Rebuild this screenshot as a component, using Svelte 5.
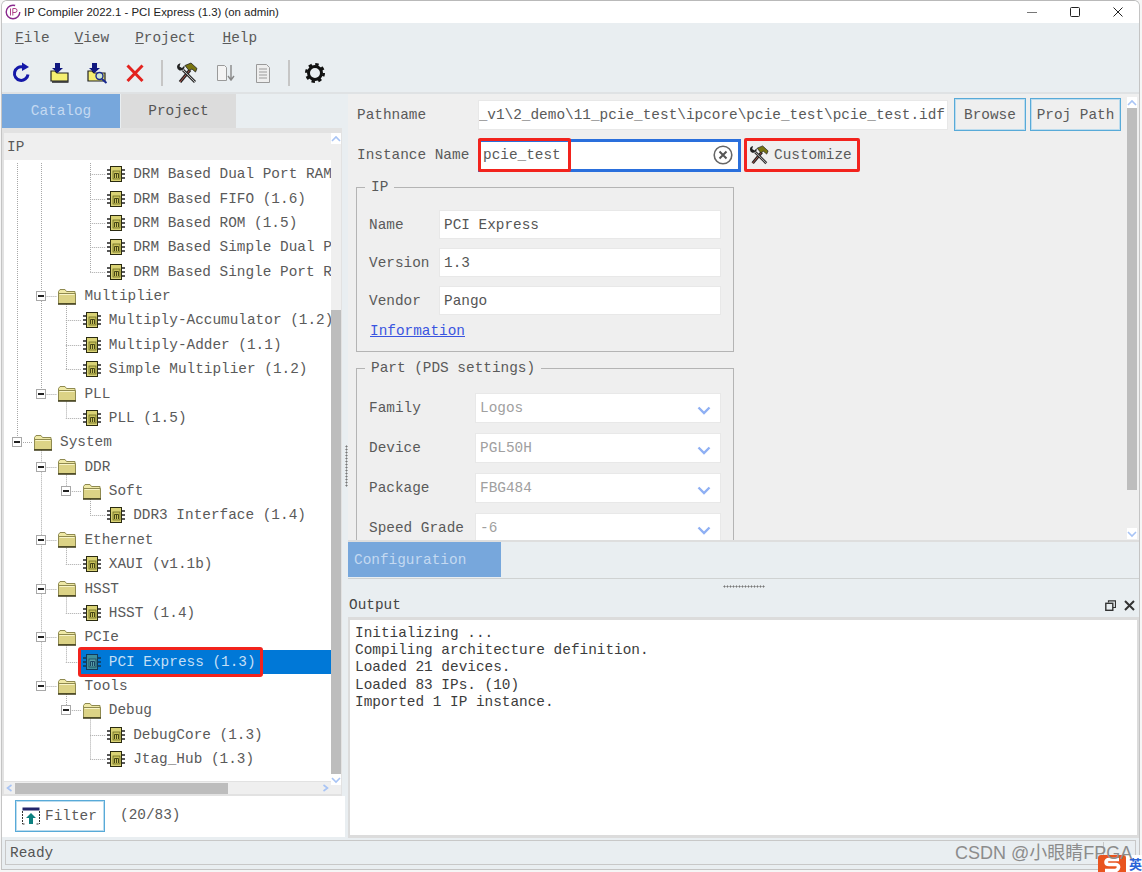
<script>
  const rows = [
    ['chip', 4, 'DRM Based Dual Port RAM (1.6)'],
    ['chip', 4, 'DRM Based FIFO (1.6)'],
    ['chip', 4, 'DRM Based ROM (1.5)'],
    ['chip', 4, 'DRM Based Simple Dual Port RAM (1.6)'],
    ['chip', 4, 'DRM Based Single Port RAM (1.6)'],
    ['folder', 2, 'Multiplier'],
    ['chip', 3, 'Multiply-Accumulator (1.2)'],
    ['chip', 3, 'Multiply-Adder (1.1)'],
    ['chip', 3, 'Simple Multiplier (1.2)'],
    ['folder', 2, 'PLL'],
    ['chip', 3, 'PLL (1.5)'],
    ['folder', 1, 'System'],
    ['folder', 2, 'DDR'],
    ['folder', 3, 'Soft'],
    ['chip', 4, 'DDR3 Interface (1.4)'],
    ['folder', 2, 'Ethernet'],
    ['chip', 3, 'XAUI (v1.1b)'],
    ['folder', 2, 'HSST'],
    ['chip', 3, 'HSST (1.4)'],
    ['folder', 2, 'PCIe'],
    ['chip', 3, 'PCI Express (1.3)', true],
    ['folder', 2, 'Tools'],
    ['folder', 3, 'Debug'],
    ['chip', 4, 'DebugCore (1.3)'],
    ['chip', 4, 'Jtag_Hub (1.3)']
  ].map(([kind, level, label, selected]) => ({ kind, level, label, selected }));

  const PITCH = 24.375;
  const y = (i) => 12.2 + PITCH * i;
  const indent = (level) => 8 + (level - 1) * 24.4;

  const X1 = 13.5, X2 = 37.5, X3 = 62.5, X4 = 86.5;
  const verticals = [
    [X1, -1, y(11)], [X2, -1, y(9)], [X2, y(11), y(21)], [X4, -1, y(4)],
    [X3, y(5), y(8)], [X3, y(9), y(10)], [X3, y(12), y(13)], [X4, y(13), y(14)],
    [X3, y(15), y(16)], [X3, y(17), y(18)], [X3, y(19), y(20)], [X3, y(21), y(22)],
    [X4, y(22), y(24)]
  ];
  const horizontals = rows.map((r, i) => {
    const x = indent(r.level) + 5;
    return { x1: x, x2: indent(r.level) + 21, y: Math.round(y(i)) + 0.5 };
  });

  const ipFields = [['Name', 'PCI Express'], ['Version', '1.3'], ['Vendor', 'Pango']];
  const partFields = [['Family', 'Logos'], ['Device', 'PGL50H'], ['Package', 'FBG484'], ['Speed Grade', '-6']];
  const logLines = ['Initializing ...', 'Compiling architecture definition.', 'Loaded 21 devices.', 'Loaded 83 IPs. (10)', 'Imported 1 IP instance.'];
  const menus = [['F', 'ile'], ['V', 'iew'], ['P', 'roject'], ['H', 'elp']];
</script>

{#snippet chip(sel)}
  <svg class="ico" width="18" height="18" viewBox="0 0 18 18">
    <path d="M0 5h4M0 9h4M0 13h4M14 5h4M14 9h4M14 13h4" stroke={sel ? '#12384f' : '#222'} stroke-width="1.3"/>
    <rect x="3.5" y="1.5" width="11" height="15" fill={sel ? '#3f8f9c' : '#d9d274'} stroke={sel ? '#123a5c' : '#2a2a10'}/>
    <rect x="6" y="6" width="7" height="8" fill={sel ? '#58a0a8' : '#c9c25c'} stroke={sel ? '#1d4a5c' : '#6a6a20'} stroke-width=".8"/>
    <path d="M7.5 13V8.5M9.5 13V8.5M11.5 13V8.5M7.5 8.5h4" stroke={sel ? '#123a5c' : '#3a3a10'} stroke-width=".9" fill="none"/>
  </svg>
{/snippet}

{#snippet folder()}
  <svg class="ico" width="18" height="17" viewBox="0 0 18 17">
    <path d="M.5 15.5V3.5l1.500-2h5l1.500 2h8.500v12z" fill="#efe9a6" stroke="#8f8a50"/>
    <path d="M.5 5.500h17v10H.5z" fill="#dcd386" stroke="#8f8a50"/>
    <path d="M0 16h18" stroke="#3c3a18" stroke-width="1.500"/>
    <path d="M1.500 6.500h15" stroke="#f8f4c8"/>
  </svg>
{/snippet}

{#snippet tools(size)}
  <svg width={size} height={size} viewBox="0 0 22 22">
    <path d="M4 20 14 8" stroke="#222" stroke-width="3.200"/>
    <path d="M4 20 14 8" stroke="#b85a50" stroke-width="1"/>
    <path d="M9 3.500 15 1l6 5.500-1.500 3.500-3.500-3-3 1.500z" fill="#787410" stroke="#222" stroke-width=".8"/>
    <path d="M7 8 19 20" stroke="#333" stroke-width="3"/>
    <path d="M7 8 19 20" stroke="#ddd" stroke-width=".8"/>
    <path d="M1 5a4.200 4.200 0 0 1 3.500-3.800L3.500 4.500l2.500 1.500 2.500-2.500a4.200 4.200 0 0 1-5 5A4 4 0 0 1 1 5z" fill="#222"/>
  </svg>
{/snippet}

{#snippet chevron()}
  <svg class="chev" width="14" height="9" viewBox="0 0 14 9"><path d="M1.500 1.500 7 7l5.500-5.500" fill="none" stroke="#8fb0f4" stroke-width="2.400"/></svg>
{/snippet}

{#snippet arrowBtn(d)}
  <svg width="10" height="8" viewBox="0 0 10 8"><path {d} fill="none" stroke="#a8c4f5" stroke-width="1.600"/></svg>
{/snippet}

<div class="window">
  <header class="title">
    <svg width="16" height="16" viewBox="0 0 16 16">
      <circle cx="8" cy="8" r="6.800" fill="none" stroke="#8a2a8e" stroke-width="1.400" stroke-dasharray="34 9"/>
      <path d="M5.500 4.500v7M7.800 4.500v7M7.800 4.500h2.200a1.800 1.800 0 0 1 0 4H7.800" fill="none" stroke="#b0438a"/>
    </svg>
    <span class="title-text">IP Compiler 2022.1 - PCI Express (1.3) (on admin)</span>
    <div class="winbtns">
      <svg width="10" height="10" viewBox="0 0 10 10"><path d="M0 5.500h10" stroke="#777"/></svg>
      <svg width="10" height="10" viewBox="0 0 10 10"><rect x=".5" y=".5" width="9" height="9" rx="1" fill="none" stroke="#222"/></svg>
      <svg width="10" height="10" viewBox="0 0 10 10"><path d="M.5 .5l9 9M9.500 .5l-9 9" stroke="#222"/></svg>
    </div>
  </header>

  <nav class="menubar">
    {#each menus as [first, rest]}
      <span class="menu"><u>{first}</u>{rest}</span>
    {/each}
  </nav>

  <div class="toolbar">
    <span class="tool">
      <svg width="22" height="22" viewBox="0 0 22 22"><path d="M17 12.500A6.800 6.800 0 1 1 12 5" fill="none" stroke="#1418a8" stroke-width="3"/><path d="M11 .5 18 5l-7 4z" fill="#1418a8"/></svg>
    </span>
    <span class="tool">
      <svg width="22" height="22" viewBox="0 0 22 22"><path d="M2 19V9h4l2 2h11v8z" fill="#f5ef70" stroke="#222" stroke-width="1.200"/><path d="M19.500 20H3" stroke="#222" stroke-width="1.500"/><path d="M6 1h5v5h3L8.500 11 3 6h3z" fill="#101880"/></svg>
    </span>
    <span class="tool">
      <svg width="22" height="22" viewBox="0 0 22 22"><path d="M2 19V9h4l2 2h11v8z" fill="#f5ef70" stroke="#222" stroke-width="1.200"/><path d="M6 1h5v5h3L8.500 11 3 6h3z" fill="#101880"/><circle cx="13.500" cy="14" r="3.500" fill="#cfe8d0" stroke="#1a2a90" stroke-width="1.400"/><path d="M16 17l4.500 4" stroke="#1a2a90" stroke-width="2"/></svg>
    </span>
    <span class="tool">
      <svg width="22" height="22" viewBox="0 0 22 22"><path d="M3.500 3.500 18.500 19M18.500 3.500 3.500 19" stroke="#e3231f" stroke-width="3"/></svg>
    </span>
    <span class="sep"></span>
    <span class="tool">{@render tools(22)}</span>
    <span class="tool">
      <svg width="22" height="22" viewBox="0 0 22 22"><path d="M3.500 3.500h7l2 2v13h-9z" fill="#f4f4f4" stroke="#9a9a9a"/><path d="M17 3v14M14 14l3 4 3-4" fill="none" stroke="#888" stroke-width="1.400"/></svg>
    </span>
    <span class="tool">
      <svg width="22" height="22" viewBox="0 0 22 22"><path d="M4.500 2.500h10l3 3v15h-13z" fill="#eeeeee" stroke="#9a9a9a"/><path d="M7 7h8M7 10h8M7 13h8M7 16h8" stroke="#9a9a9a"/></svg>
    </span>
    <span class="sep sep2"></span>
    <span class="tool">
      <svg width="22" height="22" viewBox="0 0 22 22"><circle cx="11" cy="11" r="6.500" fill="none" stroke="#111" stroke-width="3"/><circle cx="11" cy="11" r="8.700" fill="none" stroke="#111" stroke-width="2.600" stroke-dasharray="3.400 3.430"/></svg>
    </span>
  </div>

  <main class="main">
    <aside class="left">
      <div class="tabs">
        <span class="tab active">Catalog</span>
        <span class="tab second">Project</span>
      </div>
      <div class="tree-frame">
        <div class="tree-col">
          <div class="tree-head">IP</div>
          <div class="tree-body">
            <svg class="guides" width="340" height="640">
              {#each verticals as [x, a, b]}
                <line x1={x} x2={x} y1={a} y2={b}/>
              {/each}
              {#each horizontals as h}
                <line x1={h.x1} x2={h.x2} y1={h.y} y2={h.y}/>
              {/each}
            </svg>
            {#each rows as r}
              <div class="row" style="padding-left:{indent(r.level)}px">
                <span class="slot">
                  {#if r.kind === 'folder'}<span class="toggle"></span>{/if}
                </span>
                <span class="rowbody" class:selected={r.selected}>
                  {#if r.kind === 'chip'}{@render chip(r.selected)}{:else}{@render folder()}{/if}
                  <span class="label">{r.label}</span>
                  {#if r.selected}<span class="redbox"></span>{/if}
                </span>
              </div>
            {/each}
          </div>
          <div class="hscroll">
            <span class="sbtn">{@render arrowBtn('M6.500 1 2.500 4l4 3')}</span>
            <span class="hthumb"></span>
            <span class="sbtn">{@render arrowBtn('M3.500 1l4 3-4 3')}</span>
          </div>
        </div>
        <div class="vscroll">
          <span class="vbtn">{@render arrowBtn('M1 6l4-4 4 4')}</span>
          <span class="vgap"></span>
          <span class="vthumb"></span>
          <span class="vbtn">{@render arrowBtn('M1 2l4 4 4-4')}</span>
        </div>
      </div>
      <div class="filterbar">
        <span class="btn filter">
          <svg width="18" height="18" viewBox="0 0 18 18"><rect x=".5" y=".5" width="17" height="3" fill="#22246a"/><path d="M.5 4v13M17.500 4v13M.5 17h3M14.500 17h3" stroke="#333" stroke-dasharray="2 1"/><path d="M9 6l5 5h-3v6H7v-6H4z" fill="#0d8080"/></svg>
          Filter
        </span>
        <span class="count">(20/83)</span>
      </div>
    </aside>

    <div class="split">
      <span class="grip"></span>
    </div>

    <section class="right">
      <div class="config">
        <div class="config-scroll">
          <div class="formrow path">
            <span class="flabel">Pathname</span>
            <span class="input pathinput"><span>_v1\2_demo\11_pcie_test\ipcore\pcie_test\pcie_test.idf</span></span>
            <span class="btn browse">Browse</span>
            <span class="btn proj">Proj Path</span>
          </div>
          <div class="formrow inst">
            <span class="flabel">Instance Name</span>
            <span class="instinput">
              <span class="insttext">pcie_test</span>
              <svg width="20" height="20" viewBox="0 0 20 20"><circle cx="10" cy="10" r="8.800" fill="none" stroke="#666" stroke-width="1.600"/><path d="M6.500 6.500l7 7M13.500 6.500l-7 7" stroke="#555" stroke-width="2"/></svg>
            </span>
            <span class="customize">{@render tools(20)}<span>Customize</span></span>
          </div>

          <fieldset class="group ip">
            <legend>IP</legend>
            {#each ipFields as [k, v]}
              <div class="field">
                <span class="k">{k}</span>
                <span class="input val">{v}</span>
              </div>
            {/each}
            <a class="link" href="#info">Information</a>
          </fieldset>

          <fieldset class="group part">
            <legend>Part (PDS settings)</legend>
            {#each partFields as [k, v]}
              <div class="field">
                <span class="k">{k}</span>
                <span class="input val sel">{v}{@render chevron()}</span>
              </div>
            {/each}
          </fieldset>
        </div>
        <div class="cfg-scroll">
          <span class="vbtn">{@render arrowBtn('M1 6l4-4 4 4')}</span>
          <span class="cfg-thumb"></span>
          <span class="vgap"></span>
          <span class="vbtn">{@render arrowBtn('M1 2l4 4 4-4')}</span>
        </div>
      </div>
      <div class="cfgtabs"><span class="tab active cfgtab">Configuration</span></div>
      <div class="hsplit"><span class="hgrip"></span></div>
      <div class="outhead">
        <span>Output</span>
        <span class="outicons">
          <svg width="11" height="11" viewBox="0 0 11 11"><path d="M3.500 2.500V.8h7v6.700H8" fill="none" stroke="#333" stroke-width="1.200"/><rect x=".8" y="3.300" width="7" height="7" fill="none" stroke="#333" stroke-width="1.400"/></svg>
          <svg width="11" height="11" viewBox="0 0 11 11"><path d="M1 1l9 9M10 1l-9 9" stroke="#333" stroke-width="2"/></svg>
        </span>
      </div>
      <div class="log">
        {#each logLines as l}<div>{l}</div>{/each}
      </div>
    </section>
  </main>

  <footer class="status">
    <span class="ready">Ready</span>
    <span class="grip-cell"></span>
  </footer>
</div>

<span class="imebar">
  <svg width="28" height="18" viewBox="0 0 28 18"><path d="M3 0h22a3 3 0 0 1 3 3v15H0V3a3 3 0 0 1 3-3z" fill="#e9541f"/><path d="M21 4.500H11c-4 0-4 5 0 5h7c4 0 3 6-1 6H7" fill="none" stroke="#fff" stroke-width="3.600"/></svg>
  <span class="imechar">英</span>
</span>
<span class="watermark">CSDN @小眼睛FPGA</span>

<style>
  :global(body) {
    margin: 0;
    background: #f6f6f6;
    width: 1142px;
    height: 872px;
    overflow: hidden;
    position: relative;
  }
  * { box-sizing: border-box; }

  .window {
    width: 1139px;
    height: 870px;
    margin-left: 1px;
    display: flex;
    flex-direction: column;
    background: #e9eef1;
    border: 1px solid #c4c4c4;
    border-top-color: #b9b9b9;
    border-radius: 6px 6px 0 0;
    overflow: hidden;
    font-family: "Liberation Mono", monospace;
    font-size: 14.4px;
    color: #5a5a5a;
  }

  .title {
    height: 22px;
    flex: none;
    background: #fff;
    display: flex;
    align-items: center;
    padding-left: 3px;
    font-family: "Liberation Sans", "Noto Sans", sans-serif;
    font-size: 11.4px;
    color: #222;
  }
  .title-text { margin-left: 3px; }
  .winbtns {
    margin-left: auto;
    display: flex;
    gap: 33px;
    padding-right: 16px;
    align-items: center;
  }

  .menubar {
    height: 29px;
    flex: none;
    display: flex;
    align-items: center;
    padding-left: 13px;
  }
  .menu { margin-right: 25px; }
  .menu:nth-child(2) { margin-right: 26px; }
  .menu:nth-child(3) { margin-right: 27px; }

  .toolbar {
    height: 40px;
    flex: none;
    display: flex;
    align-items: center;
    padding: 2px 0 0 9px;
  }
  .tool {
    width: 22px;
    height: 22px;
    margin-right: 16px;
    display: flex;
  }
  .tool:nth-child(2) { margin-right: 15px; }
  .sep {
    width: 2px;
    height: 26px;
    background: #c6c6c6;
    margin: 0 13px 0 -1px;
  }
  .sep2 { margin: 0 14px 0 -2px; }

  .main {
    flex: 1;
    min-height: 0;
    display: flex;
    border-top: 2px solid #dfe2e4;
  }

  .left {
    width: 343px;
    flex: none;
    display: flex;
    flex-direction: column;
  }
  .tabs { display: flex; height: 34px; flex: none; }
  .tab {
    width: 118px;
    display: flex;
    align-items: center;
    justify-content: center;
    background: #dcdcdc;
    color: #555;
  }
  .tab.active { background: #77a7dc; color: #c4d9f1; }
  .tab.second { width: 115px; margin-left: 1px; }

  .tree-frame {
    width: 340px;
    height: 668px;
    flex: none;
    background: #e2e2e2;
    padding: 5px 0 2px 2px;
    display: flex;
  }
  .tree-col { flex: 1; min-width: 0; display: flex; flex-direction: column; }
  .tree-head {
    height: 27px;
    flex: none;
    background: #efefef;
    display: flex;
    align-items: center;
    padding-left: 3px;
  }
  .tree-body {
    flex: 1;
    min-height: 0;
    position: relative;
    background: #fff;
    overflow: hidden;
    padding-top: 2px;
  }
  .guides { position: absolute; left: 0; top: 2px; }
  .guides line { stroke: #a8a8a8; stroke-dasharray: 1 1; }

  .row {
    height: 24.375px;
    display: flex;
    align-items: stretch;
    white-space: nowrap;
    position: relative;
  }
  .slot {
    width: 21px;
    flex: none;
    display: flex;
    align-items: center;
  }
  .toggle {
    width: 10px;
    height: 10px;
    background: #fff;
    border: 1px solid #a8a8a8;
    position: relative;
  }
  .toggle::after {
    content: "";
    position: absolute;
    left: 1px;
    right: 1px;
    top: 3px;
    height: 2px;
    background: #222;
  }
  .rowbody {
    flex: 1;
    display: flex;
    align-items: center;
    gap: 8px;
    position: relative;
    min-width: 0;
    padding-left: 1px;
  }
  .rowbody.selected { background: #0078d7; color: #c4dff5; margin-left: -2px; padding-left: 3px; }
  .ico { flex: none; position: relative; }
  .label { position: relative; }
  .redbox {
    position: absolute;
    left: -2px;
    top: -3px;
    width: 185px;
    height: 30px;
    border: 3px solid #f2231d;
    border-radius: 3px;
  }

  .hscroll {
    height: 12px;
    flex: none;
    background: #efefef;
    display: flex;
    align-items: center;
    margin-top: 1px;
  }
  .sbtn { width: 11px; flex: none; display: flex; justify-content: center; }
  .hthumb { width: 213px; height: 11px; background: #bdbdbd; }
  .hscroll .sbtn:last-child { margin-left: auto; margin-right: 1px; }

  .vscroll, .cfg-scroll {
    width: 10px;
    flex: none;
    display: flex;
    flex-direction: column;
    background: #efefef;
  }
  .vscroll { margin-right: 1px; }
  .vbtn {
    height: 11px;
    flex: none;
    background: #fff;
    display: flex;
    align-items: center;
    justify-content: center;
  }
  .vscroll .vgap { height: 166px; flex: none; }
  .vthumb { flex: 1; background: #bdbdbd; }
  .vscroll .vbtn:last-child { margin-bottom: 9px; }
  .vgap { flex: 1; }

  .filterbar {
    flex: 1;
    background: #fff;
    display: flex;
    align-items: flex-start;
    padding: 4px 0 0 13px;
    border-bottom: 1px solid #e9eef1;
  }
  .btn {
    display: inline-flex;
    align-items: center;
    justify-content: center;
    border: 1px solid #58aad8;
    box-shadow: inset 0 0 0 1px #bcdcee;
    background: #efefef;
    flex: none;
  }
  .filter {
    width: 90px;
    height: 32px;
    background: #fff;
    gap: 5px;
    justify-content: flex-start;
    padding-left: 6px;
  }
  .count { margin: 7px 0 0 15px; }

  .split {
    width: 3px;
    flex: none;
    display: flex;
    align-items: center;
    justify-content: center;
    background: #e9eef1;
  }
  .grip {
    width: 3px;
    height: 42px;
    background-image: radial-gradient(#777 45%, transparent 50%);
    background-size: 3px 3px;
  }

  .right {
    flex: 1;
    min-width: 0;
    display: flex;
    flex-direction: column;
  }
  .config {
    height: 448px;
    flex: none;
    display: flex;
    background: #efefef;
    border-bottom: 2px solid #dedede;
    overflow: hidden;
    padding-right: 2px;
  }
  .config-scroll {
    flex: 1;
    min-width: 0;
    overflow: hidden;
    padding: 4px 0 0 9px;
  }
  .cfg-scroll { padding-top: 3px; }
  .cfg-scroll .vbtn:last-child { margin-bottom: 1px; }
  .cfg-thumb { height: 382px; flex: none; background: #bdbdbd; }

  .formrow { display: flex; align-items: center; }
  .flabel { width: 121px; flex: none; }
  .input {
    background: #fff;
    border: 1px solid #e8e8e8;
    display: flex;
    align-items: center;
    overflow: hidden;
    white-space: nowrap;
  }
  .path { height: 33px; }
  .pathinput {
    width: 470px;
    height: 30px;
    justify-content: flex-end;
    padding-right: 2px;
    flex: none;
  }
  .browse { width: 72px; height: 33px; margin-left: 6px; }
  .proj { width: 91px; height: 33px; margin-left: 4px; }

  .inst { height: 34px; margin-top: 7px; }
  .instinput {
    width: 263px;
    height: 33px;
    flex: none;
    background: #fff;
    border: 3px solid #2a6fdc;
    display: flex;
    align-items: center;
    justify-content: space-between;
    padding-right: 5px;
  }
  .insttext {
    display: flex;
    align-items: center;
    width: 93px;
    height: 34px;
    margin: -2px 0 -2px -3px;
    padding-left: 2px;
    border: 3px solid #f2231d;
    border-radius: 2px;
    flex: none;
  }
  .customize {
    margin-left: 3px;
    width: 116px;
    height: 34px;
    display: flex;
    align-items: center;
    gap: 5px;
    padding-left: 2px;
    border: 3px solid #f2231d;
    border-radius: 2px;
    flex: none;
  }

  .group {
    width: 378px;
    margin: 0 0 0 -1px;
    padding: 0 12px;
    border: 1.500px solid #b4b4b4;
    min-inline-size: 0;
  }
  .group legend { padding: 0 6px; margin-left: -4px; }
  .ip { margin-top: 7px; height: 173px; }
  .part { margin-top: 8px; height: 210px; }

  .field { display: flex; align-items: center; height: 29px; margin-bottom: 9px; }
  .ip .field:first-of-type { margin-top: 15px; }
  .part .field { height: 30px; margin-bottom: 10px; }
  .part .field:first-of-type { margin-top: 17px; }
  .k { width: 70px; flex: none; white-space: nowrap; }
  .part .k { width: 106px; }
  .val { width: 282px; height: 100%; padding-left: 4px; flex: none; color: #555; }
  .part .val { width: 246px; }
  .sel { color: #a0a0a0; justify-content: space-between; padding-right: 9px; }
  .chev { margin-top: 4px; }
  .link { color: #3a55e0; display: block; margin: -1px 0 0 1px; }

  .cfgtabs {
    height: 37px;
    flex: none;
    display: flex;
    border-bottom: 1px solid #cfd2d2;
    padding-bottom: 1px;
  }
  .cfgtab {
    width: 153px;
    justify-content: flex-start;
    padding-left: 6px;
  }
  .hsplit { height: 15px; flex: none; display: flex; align-items: center; justify-content: center; }
  .hgrip {
    width: 42px;
    height: 3px;
    background-image: radial-gradient(#777 45%, transparent 50%);
    background-size: 3px 3px;
  }
  .outhead {
    height: 23px;
    flex: none;
    display: flex;
    align-items: center;
    justify-content: space-between;
    padding: 0 4px 1px 1px;
    color: #444;
  }
  .outicons { display: flex; gap: 8px; align-items: center; }
  .log {
    flex: 1;
    min-height: 0;
    background: #fff;
    border: 2px solid #dcdcdc;
    border-top-width: 3px;
    border-bottom-width: 3px;
    padding: 5px 5px;
    line-height: 17.2px;
    color: #3c3c3c;
  }

  .status {
    height: 25px;
    flex: none;
    margin: 2px 3px 4px 3px;
    border: 1px solid #c8c8c8;
    display: flex;
    align-items: center;
    padding: 1px 0 0 4px;
    color: #555;
  }
  .grip-cell {
    margin-left: auto;
    width: 32px;
    height: 100%;
    border-left: 1px solid #c8c8c8;
  }

  .watermark {
    position: absolute;
    left: 955px;
    top: 843px;
    font-family: "Liberation Sans", "Noto Sans CJK SC", sans-serif;
    font-size: 18px;
    line-height: 20px;
    color: #8c8c8c;
    white-space: nowrap;
  }
  .imebar {
    position: absolute;
    left: 1098px;
    top: 855px;
    display: flex;
  }
  .imechar {
    background: #fff;
    color: #2a63d8;
    font-family: "Noto Sans CJK SC", sans-serif;
    font-size: 13px;
    font-weight: 700;
    line-height: 17px;
    padding-left: 3px;
    width: 16px;
  }
</style>
